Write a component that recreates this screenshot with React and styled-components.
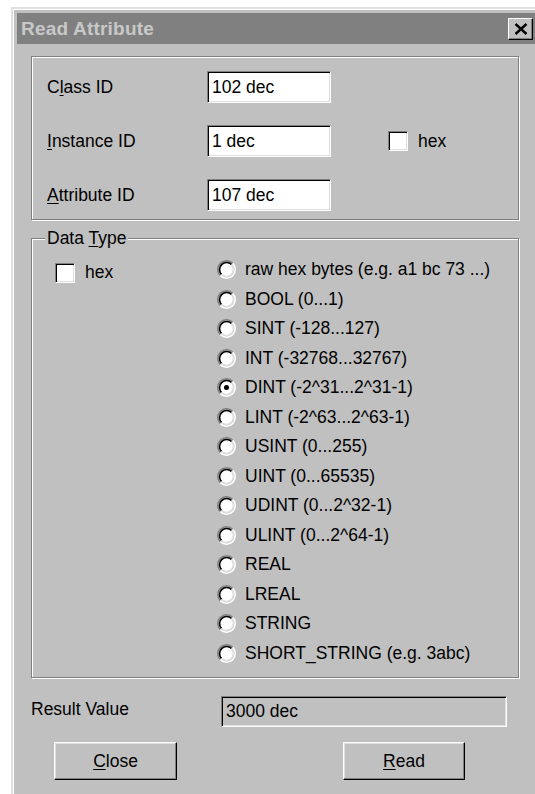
import React, { useState } from 'react';
import styled, { createGlobalStyle } from 'styled-components';

const GlobalStyle = createGlobalStyle`
  html, body {
    margin: 0;
    background: #fff;
    overflow: hidden;
  }
  body {
    font-family: 'Liberation Sans', Arial, sans-serif;
  }
`;

const Page = styled.div`
  width: 535px;
  height: 794px;
  overflow: hidden;
  box-sizing: border-box;
  padding: 7px 0 0 11px;
`;

const Window = styled.div`
  width: 531px;
  height: 820px;
  box-sizing: border-box;
  background: #c0c0c0;
  border: 2px solid;
  border-color: #e0e0e0 #404040 #404040 #e0e0e0;
  box-shadow: inset 1px 1px 0 #fff;
  padding: 4px;
  color: #000;
  font-size: 17.5px;
`;

const TitleBar = styled.div`
  height: 31px;
  background: #808080;
  display: flex;
  align-items: center;
  justify-content: space-between;
  padding-left: 4px;
`;

const Title = styled.span`
  font-weight: bold;
  font-size: 19px;
  color: #c8c8c8;
  letter-spacing: 0.2px;
`;

const CloseBox = styled.div`
  width: 25px;
  height: 22px;
  box-sizing: border-box;
  margin-right: 3px;
  background: #c0c0c0;
  border: 1px solid;
  border-color: #fff #000 #000 #fff;
  box-shadow: inset -1px -1px 0 #808080;
  display: flex;
  align-items: center;
  justify-content: center;
`;

const Client = styled.div`
  padding: 12px 17px 0 14px;
`;

const GroupBox = styled.div`
  position: relative;
  box-sizing: border-box;
  border: 1px solid #808080;
  box-shadow: inset 1px 1px 0 #fff, 1px 1px 0 #fff;
  margin-top: ${(p) => p.$gap || 0}px;
  padding: ${(p) => p.$pad};
`;

const Legend = styled.span`
  position: absolute;
  top: -11px;
  left: 13px;
  padding: 0 2px;
  line-height: 20px;
  background: #c0c0c0;
`;

const IdGrid = styled.div`
  display: grid;
  grid-template-columns: 175px 124px 57px auto;
  grid-auto-rows: 32px;
  row-gap: 22px;
  align-items: center;
`;

const Label = styled.span`
  padding-left: 15px;
  line-height: 20px;
  white-space: nowrap;
`;

const Key = styled.u`
  text-underline-offset: 2px;
  text-decoration-thickness: 1px;
`;

const Field = styled.div`
  box-sizing: border-box;
  width: ${(p) => p.$w}px;
  height: ${(p) => p.$h || 32}px;
  background: ${(p) => (p.$readOnly ? '#c0c0c0' : '#fff')};
  border: 1px solid;
  border-color: #808080 #fff #fff #808080;
  box-shadow: inset 1px 1px 0 #000, inset -1px -1px 0 #dfdfdf;
  padding: 0 4px;
  display: flex;
  align-items: center;
  white-space: nowrap;
`;

const CheckRow = styled.label`
  display: flex;
  align-items: center;
  gap: 10px;
  white-space: nowrap;
`;

const Box = styled.span`
  box-sizing: border-box;
  width: 20px;
  height: 20px;
  background: #fff;
  border: 1px solid;
  border-color: #808080 #fff #fff #808080;
  box-shadow: inset 1px 1px 0 #000, inset -1px -1px 0 #dfdfdf;
`;

const TypeArea = styled.div`
  display: flex;
`;

const HexColumn = styled.div`
  width: 162px;
  padding: 7px 0 0 23px;
`;

const RadioList = styled.div`
  display: flex;
  flex-direction: column;
`;

const RadioRow = styled.div`
  height: 29.5px;
  display: flex;
  align-items: center;
  gap: 9px;
  white-space: nowrap;
  cursor: default;
`;

const ResultRow = styled.div`
  display: grid;
  grid-template-columns: 190px 286px;
  margin-top: 18px;
  align-items: start;
`;

const ResultLabel = styled.span`
  padding-top: 3px;
  line-height: 20px;
`;

const ButtonRow = styled.div`
  display: flex;
  gap: 166px;
  padding-left: 23px;
  margin-top: 15px;
`;

const Button = styled.button`
  box-sizing: border-box;
  width: ${(p) => p.$w}px;
  height: 38px;
  background: #c0c0c0;
  border: 1px solid;
  border-color: #fff #000 #000 #fff;
  box-shadow: inset -1px -1px 0 #808080, inset 1px 1px 0 #dfdfdf;
  font: inherit;
  color: #000;
  padding: 0;
`;

const RadioIcon = ({ checked }) => (
  <svg width="19" height="19" viewBox="0 0 12 12">
    <circle cx="6" cy="6" r="4.2" fill="#fff" />
    <path d="M2.11 9.89 A5.5 5.5 0 0 1 9.89 2.11" fill="none" stroke="#808080" strokeWidth="1" />
    <path d="M9.89 2.11 A5.5 5.5 0 0 1 2.11 9.89" fill="none" stroke="#fff" strokeWidth="1" />
    <path d="M2.82 9.18 A4.5 4.5 0 0 1 9.18 2.82" fill="none" stroke="#000" strokeWidth="1" />
    <path d="M9.18 2.82 A4.5 4.5 0 0 1 2.82 9.18" fill="none" stroke="#dfdfdf" strokeWidth="1" />
    {checked && <circle cx="6" cy="6" r="1.6" fill="#000" />}
  </svg>
);

const types = [
  'raw hex bytes (e.g. a1 bc 73 ...)',
  'BOOL (0...1)',
  'SINT (-128...127)',
  'INT (-32768...32767)',
  'DINT (-2^31...2^31-1)',
  'LINT (-2^63...2^63-1)',
  'USINT (0...255)',
  'UINT (0...65535)',
  'UDINT (0...2^32-1)',
  'ULINT (0...2^64-1)',
  'REAL',
  'LREAL',
  'STRING',
  'SHORT_STRING (e.g. 3abc)',
];

const App = () => {
  const [selected, setSelected] = useState(4);

  return (
    <Page>
      <GlobalStyle />
      <Window>
        <TitleBar>
          <Title>Read Attribute</Title>
          <CloseBox>
            <svg width="14" height="12" viewBox="0 0 14 12">
              <path d="M1.5 1 L12.5 11 M12.5 1 L1.5 11" stroke="#000" strokeWidth="2.4" />
            </svg>
          </CloseBox>
        </TitleBar>
        <Client>
          <GroupBox $pad="14px 0 8px 0">
            <IdGrid>
              <Label>C<Key>l</Key>ass ID</Label>
              <Field $w={124}>102 dec</Field>
              <span />
              <span />
              <Label><Key>I</Key>nstance ID</Label>
              <Field $w={124}>1 dec</Field>
              <span />
              <CheckRow>
                <Box />
                hex
              </CheckRow>
              <Label><Key>A</Key>ttribute ID</Label>
              <Field $w={124}>107 dec</Field>
            </IdGrid>
          </GroupBox>
          <GroupBox $gap={18} $pad="16px 0 9px 0">
            <Legend>Data <Key>T</Key>ype</Legend>
            <TypeArea>
              <HexColumn>
                <CheckRow>
                  <Box />
                  hex
                </CheckRow>
              </HexColumn>
              <RadioList>
                {types.map((t, i) => (
                  <RadioRow key={t} onClick={() => setSelected(i)}>
                    <RadioIcon checked={selected === i} />
                    {t}
                  </RadioRow>
                ))}
              </RadioList>
            </TypeArea>
          </GroupBox>
          <ResultRow>
            <ResultLabel>Result Value</ResultLabel>
            <Field $w={286} $h={31} $readOnly>3000 dec</Field>
          </ResultRow>
          <ButtonRow>
            <Button $w={123}><Key>C</Key>lose</Button>
            <Button $w={122}><Key>R</Key>ead</Button>
          </ButtonRow>
        </Client>
      </Window>
    </Page>
  );
};

export default App;
